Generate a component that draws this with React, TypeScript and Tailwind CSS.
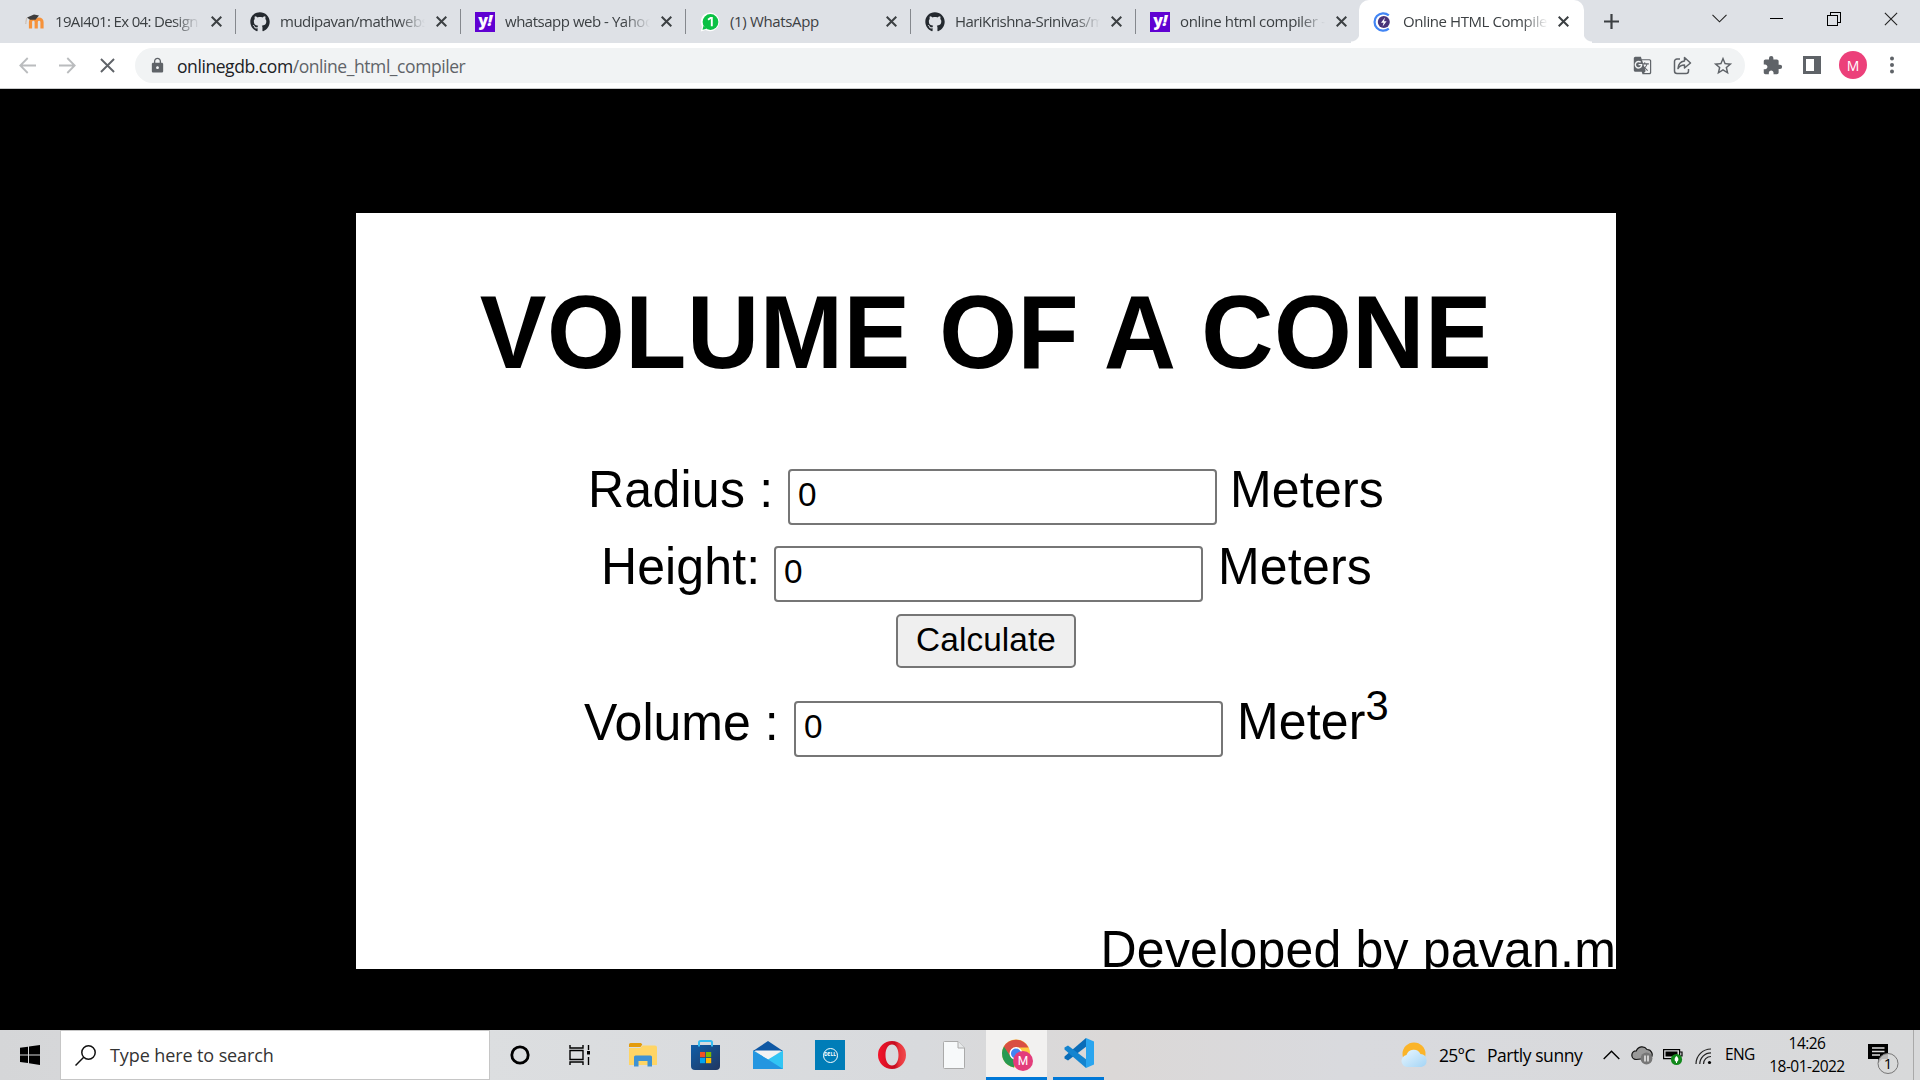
import React from "react";
import { FaGithub } from "react-icons/fa";
import { MdExtension, MdLock, MdStarBorder, MdGTranslate } from "react-icons/md";

const UI = "font-['Open_Sans',sans-serif]";

function Moodle() {
  return (
    <svg width="20" height="16" viewBox="0 0 20 16" fill="none">
      <path d="M4.500 15V8.500a2.600 2.600 0 0 1 5.700 0V15M10.200 8.500a2.800 2.800 0 0 1 5.800 0V15" stroke="#f6923a" strokeWidth="3.200" transform="translate(1 -.5)" />
      <path d="M2 3.600 9 .5l5 1-3.500 4.200H5z" fill="#3d3d3d" />
      <path d="M2 3.800C.9 6 1 8 .8 10" stroke="#c9b8a8" strokeWidth="1" />
    </svg>
  );
}

function Yahoo() {
  return (
    <span className="flex h-5 w-5 items-center justify-center bg-[#6001d2] text-[16px] leading-none font-extrabold tracking-[-0.5px] text-white">
      <span className="-mt-[3px]">y<i>!</i></span>
    </span>
  );
}

function WhatsApp() {
  return (
    <svg width="20" height="20" viewBox="0 0 20 20">
      <path d="M.8 19.500 2 14.500A9.300 9.300 0 1 1 5.600 18z" fill="#fff" />
      <circle cx="10.500" cy="10" r="7.900" fill="#0bc144" />
      <path d="m2.500 17.800 1-4 3 3z" fill="#0bc144" />
      <path d="M8 7.800 10.500 6h1.300v8.200" stroke="#fff" strokeWidth="1.900" fill="none" />
    </svg>
  );
}

function Gdb() {
  return (
    <svg width="20" height="20" viewBox="0 0 20 20" fill="none">
      <path d="M15.800 3.300A8.700 8.700 0 1 0 15.800 16.700" stroke="#4285f4" strokeWidth="2.200" />
      <circle cx="10.800" cy="10" r="6" fill="#4a3479" />
      <path d="m12 5.500-4 5.300h2.600L9.600 14.500l4-5.300H11z" fill="#fff" />
    </svg>
  );
}

function Cross({ size = 11, w = 2, color = "#3c4043" }: { size?: number; w?: number; color?: string }) {
  return (
    <svg width={size} height={size} viewBox="0 0 11 11" className="shrink-0">
      <path d="M.7.7l9.600 9.600M10.300.7.7 10.300" stroke={color} strokeWidth={(w * 11) / size} />
    </svg>
  );
}

type TabData = { icon: React.ReactNode; title: string; fit: string; fade: boolean };

const tabs: TabData[] = [
  { icon: <Moodle />, title: "19AI401: Ex 04: Design", fit: "tracking-[-0.65px]", fade: true },
  { icon: <FaGithub size={20} color="#24292f" />, title: "mudipavan/mathwebs", fit: "tracking-[-0.500px]", fade: true },
  { icon: <Yahoo />, title: "whatsapp web - Yahoo", fit: "tracking-[-0.480px]", fade: true },
  { icon: <WhatsApp />, title: "(1) WhatsApp", fit: "tracking-[-0.350px]", fade: false },
  { icon: <FaGithub size={20} color="#24292f" />, title: "HariKrishna-Srinivas/m", fit: "tracking-[-0.550px]", fade: true },
  { icon: <Yahoo />, title: "online html compiler -", fit: "tracking-[-0.360px]", fade: true },
];

function TabTitle({ t }: { t: TabData }) {
  return (
    <span className="-mt-[2px] -ml-px block h-[22px] w-[145px] overflow-hidden text-[15px] leading-[22px] whitespace-nowrap text-[#3c4043]">
      <span className={t.fit + (t.fade ? " block [mask-image:linear-gradient(to_right,#000_82%,transparent)]" : "")}>{t.title}</span>
    </span>
  );
}

function TabStrip() {
  return (
    <div className="flex h-[43px] bg-[#dee1e6]">
      <div className="flex pl-[11px]">
        {tabs.map((t, i) => (
          <div key={i} className="flex h-[43px] w-[225px] items-center pl-[14px]">
            <span className="flex w-[31px]">{t.icon}</span>
            <TabTitle t={t} />
            <span className="ml-[11px] flex"><Cross /></span>
            {i < 5 && <span className="ml-[13px] h-[25px] w-px shrink-0 bg-[#85888d]" />}
          </div>
        ))}
      </div>
      <div className="-ml-[10px] flex h-[43px] items-end">
        <span className="h-[10px] w-[8px] bg-[radial-gradient(circle_at_0_0,#dee1e6_8px,#fff_9px)]" />
        <div className="flex h-[43px] w-[225px] items-center rounded-t-[10px] bg-white pl-[14px]">
          <span className="flex w-[31px]"><Gdb /></span>
          <TabTitle t={{ icon: null, title: "Online HTML Compile", fit: "tracking-[-0.420px]", fade: true }} />
          <span className="ml-[10px] flex"><Cross /></span>
        </div>
        <span className="h-[10px] w-[8px] bg-[radial-gradient(circle_at_100%_0,#dee1e6_8px,#fff_9px)]" />
      </div>
      <div className="flex h-[43px] flex-1 items-center pl-[12px]">
        <svg width="15" height="15" viewBox="0 0 15 15"><path d="M7.500 0v15M0 7.500h15" stroke="#3c4043" strokeWidth="2.200" /></svg>
        <svg className="-mt-[6px] ml-[93px]" width="15" height="9" viewBox="0 0 15 9" fill="none"><path d="m.5.8 7 7 7-7" stroke="#222" strokeWidth="1.100" /></svg>
        <span className="-mt-[6px] ml-[43px] h-px w-[13px] bg-black" />
        <svg className="-mt-[6px] ml-[44px]" width="14" height="14" viewBox="0 0 14 14" fill="none" stroke="#000" shapeRendering="crispEdges"><path d="M.5 3.500h10v10H.5zM3.500 3V.5h10v10H11" /></svg>
        <span className="-mt-[6px] ml-[43px] flex"><Cross size={14} w={1.100} color="#222" /></span>
      </div>
    </div>
  );
}

function Arrow({ flip = false }: { flip?: boolean }) {
  return (
    <svg width="17" height="17" viewBox="0 0 17 17" fill="none" className={flip ? "rotate-180" : ""}>
      <path d="M17 8.500H1.500M8.700 1 1.300 8.500 8.700 16" stroke="#babcbe" strokeWidth="1.800" />
    </svg>
  );
}

function Toolbar() {
  return (
    <div className="flex h-[45px] items-center bg-white pb-px pl-[19px]">
      <Arrow />
      <span className="ml-[23px] flex"><Arrow flip /></span>
      <span className="ml-[24px] flex"><Cross size={15} w={1.900} color="#5f6368" /></span>
      <div className="mt-px ml-[20px] flex h-[35px] w-[1610px] items-center rounded-full bg-[#f1f3f4] pl-[14px]">
        <MdLock size={17} color="#5f6368" />
        <span className="ml-[11px] text-[17.500px] leading-[24px] tracking-[-0.430px] whitespace-nowrap text-[#5f6368]">
          <span className="text-[#202124]">onlinegdb.com</span>/online_html_compiler
        </span>
        <span className="ml-auto flex items-center pr-[11px]">
          <MdGTranslate size={19} color="#5f6368" />
          <svg className="ml-[21px]" width="19" height="19" viewBox="0 0 19 19" fill="none" stroke="#5f6368" strokeWidth="1.500" strokeLinejoin="round">
            <path d="M7 3H4a2.500 2.500 0 0 0-2.500 2.500V15A2.500 2.500 0 0 0 4 17.500h9a2.500 2.500 0 0 0 2.500-2.500v-2" />
            <path d="M11.500 1.500 17.500 7l-6 5V9C8.500 9 6.500 10 5 12.500 5.300 8.500 7.500 5.500 11.500 5z" />
          </svg>
          <MdStarBorder className="ml-[20px]" size={22} color="#5f6368" />
        </span>
      </div>
      <MdExtension className="ml-[17px]" size={21} color="#5f6368" />
      <svg className="ml-[20px]" width="18" height="18" viewBox="0 0 18 18"><path d="M0 0h18v18H0zM3 3v12h8V3z" fill="#5f6368" fillRule="evenodd" /></svg>
      <span className="ml-[18px] flex h-7 w-7 items-center justify-center rounded-full bg-[#ec407a] text-[14px] text-white">M</span>
      <svg className="ml-[23px]" width="4" height="18" viewBox="0 0 4 18" fill="#5f6368"><circle cx="2" cy="2.500" r="2" /><circle cx="2" cy="9" r="2" /><circle cx="2" cy="15.500" r="2" /></svg>
    </div>
  );
}

function NumberBox() {
  return <input defaultValue="0" className="h-[56px] w-[429px] shrink-0 rounded-[4px] border-2 border-[#767676] bg-white px-[8px] pb-[4px] text-[33.330px] text-black outline-none" />;
}

const label = "block shrink-0 origin-[50%_80%] scale-y-[1.04] whitespace-pre text-[50px] leading-[56px]";

function Calculator() {
  return (
    <div className="ml-[356px] h-[756px] w-[1260px] overflow-hidden bg-white font-['Liberation_Sans',sans-serif] text-black">
      <h1 className="origin-[50%_80%] scale-y-[1.04] pt-[62px] text-center text-[100px] leading-[114px] font-bold tracking-[0.550px]">VOLUME OF A CONE</h1>
      <div className="mt-[80px] flex h-[56px] pl-[232px]">
        <span className={label + " -mt-[7px] w-[200px] tracking-[0.250px]"}>Radius :</span>
        <NumberBox />
        <span className={label + " -mt-[7px] ml-[13px] tracking-[0.200px]"}>Meters</span>
      </div>
      <div className="mt-[21px] flex h-[56px] pl-[245px]">
        <span className={label + " -mt-[7px] w-[173px] tracking-[0.100px]"}>Height:</span>
        <NumberBox />
        <span className={label + " -mt-[7px] ml-[15px] tracking-[0.200px]"}>Meters</span>
      </div>
      <button className="mt-[12px] ml-[540px] flex h-[54px] w-[180px] items-center justify-center rounded-[5px] border-2 border-[#767676] bg-[#efefef] pb-[2px] text-[33.330px] tracking-[0.100px]">Calculate</button>
      <div className="mt-[33px] flex h-[56px] pl-[228px]">
        <span className={label + " -mt-[6px] w-[210px]"}>Volume :</span>
        <NumberBox />
        <span className={label + " -mt-[7px] ml-[14px] tracking-[0.150px]"}>Meter</span>
        <span className="-mt-[19px] text-[41.670px] leading-[48px]">3</span>
      </div>
      <p className={label + " mt-[165px] text-right tracking-[0.200px]"}>Developed by pavan.m</p>
    </div>
  );
}

function Taskbar() {
  return (
    <div className="flex h-[50px] items-center bg-[linear-gradient(to_right,#d5d6d8,#dcdee0_25%,#d8dadd_48%,#dbd8d7_58%,#d9dade_70%,#d8d9da)] text-black">
      <div className="flex w-[60px] justify-center">
        <svg width="20" height="20" viewBox="0 0 20 20"><path d="M0 2.800 8 1.700V9.400H0zM9 1.500 20 0v9.400H9zM0 10.400h8V18l-8-1.100zM9 10.400h11V20L9 18.300z" /></svg>
      </div>
      <div className="flex h-[50px] w-[430px] items-center border border-[#c6c6c6] bg-white pl-[14px]">
        <svg width="21" height="21" viewBox="0 0 21 21" fill="none" stroke="#111" strokeWidth="1.500"><circle cx="13.500" cy="7.500" r="6.700" /><path d="M8.700 12.300.5 20.500" /></svg>
        <span className="ml-[14px] text-[18px] tracking-[-0.100px] text-[#333]">Type here to search</span>
      </div>
      <svg className="ml-[20px]" width="20" height="20" viewBox="0 0 20 20"><circle cx="10" cy="10" r="8.200" fill="none" stroke="#000" strokeWidth="2.800" /></svg>
      <svg className="ml-[39px]" width="22" height="20" viewBox="0 0 22 20" fill="none" stroke="#000" strokeWidth="1.400"><path d="M1 0v3h13V0M1 5.500h13v9H1zM1 20v-3h13v3M19.500 0v5M19.500 12v8" /><path d="M18 6h3v3.500h-3z" fill="#000" stroke="none" /></svg>
      <svg className="ml-[38px]" width="28" height="24" viewBox="0 0 28 24"><path d="M0 5h11l2.500-2.500H26A2 2 0 0 1 28 4.500V22H0z" fill="#ffd565" /><path d="M0 1.500A1.500 1.500 0 0 1 1.500 0H12l1.300 1.500L11.500 4H0z" fill="#e39b0c" /><path d="M5 23.500V14a1.500 1.500 0 0 1 1.500-1.500h15A1.500 1.500 0 0 1 23 14v9.500h-4.500V18h-9v5.500z" fill="#3f92d3" /></svg>
      <svg className="ml-[34px]" width="29" height="30" viewBox="0 0 29 30"><defs><linearGradient id="store" x1="0" y1="0" x2="1" y2="1"><stop stopColor="#0f5ea8" /><stop offset="1" stopColor="#22365f" /></linearGradient></defs><path d="M0 5h29v21a4 4 0 0 1-4 4H4a4 4 0 0 1-4-4z" fill="url(#store)" /><path d="M8 6.500V2.500A1.500 1.500 0 0 1 9.500 1h10A1.500 1.500 0 0 1 21 2.500v4" fill="none" stroke="#36bdf2" strokeWidth="2" /><path d="M9 12h5.200v5.200H9z" fill="#f25022" /><path d="M15 12h5.200v5.200H15z" fill="#7fba00" /><path d="M9 18h5.200v5.200H9z" fill="#00a4ef" /><path d="M15 18h5.200v5.200H15z" fill="#ffb900" /></svg>
      <svg className="ml-[33px]" width="30" height="28" viewBox="0 0 30 28"><path d="M0 10 15 0l15 10H0z" fill="#0f58a4" /><path d="M2 9.500h26L15 20z" fill="#f3f3f3" /><path d="M0 9.500V28h30V9.500L15 18.500z" fill="#32c5f4" /><path d="M0 9.500V28h30L15 18.500z" fill="#2496e0" /></svg>
      <span className="ml-[32px] flex h-[30px] w-[30px] items-center justify-center bg-[#007db8]"><span className="flex h-[15px] w-[15px] items-center justify-center rounded-full border border-white text-[5px] font-bold text-white">DELL</span></span>
      <svg className="ml-[32px]" width="30" height="30" viewBox="0 0 30 30"><defs><linearGradient id="opera" x1="0" y1="0" x2="1" y2="0"><stop stopColor="#f4142b" /><stop offset=".6" stopColor="#c40d20" /><stop offset=".75" stopColor="#e8323a" /><stop offset="1" stopColor="#f04a4e" /></linearGradient></defs><path fillRule="evenodd" d="M15 1a14 14 0 1 0 0 28 14 14 0 0 0 0-28zM15 4.500c4 0 6.500 4.500 6.500 10.500S19 25.500 15 25.500 8.500 21 8.500 15 11 4.500 15 4.500z" fill="url(#opera)" /></svg>
      <svg className="ml-[36px]" width="22" height="28" viewBox="0 0 22 28"><path d="M.5 1.500a1 1 0 0 1 1-1H15L21.500 7v19.500a1 1 0 0 1-1 1h-19a1 1 0 0 1-1-1z" fill="#f7f9fa" stroke="#aaa" /><path d="M15 .5V7h6.500" fill="#e8eaeb" stroke="#aaa" /></svg>
      <span className="ml-[21px] flex h-[50px] w-[61px] items-center justify-center border-b-[3px] border-[#0078d7] bg-[#f2f1f0]">
        <svg className="mt-[3px]" width="32" height="32" viewBox="0 0 32 32"><circle cx="15" cy="14.500" r="14" fill="#ffcd40" /><path d="M15 14.500 2.900 7.500A14 14 0 0 0 13 28.400z" fill="#279a52" /><path d="M2.900 7.500A14 14 0 0 1 27.500 8.500H15L9.500 17.500z" fill="#d94f43" /><circle cx="15" cy="14.500" r="6.500" fill="#fff" /><circle cx="15" cy="14.500" r="5" fill="#4285f4" /><circle cx="22" cy="22" r="10" fill="#e33d7b" /><text x="22" y="26.300" textAnchor="middle" fontFamily="Roboto" fontSize="12" fill="#fff">M</text></svg>
      </span>
      <span className="ml-[6px] flex h-[50px] w-[51px] items-center justify-center border-b-[3px] border-[#0078d7]">
        <svg className="mb-px" width="30" height="30" viewBox="0 0 30 30"><path d="M23 8 4 22.500 .5 20.500v-2L22 0z" fill="#0a6db8" /><path d="M23 22 4 7.500.5 9.500v2L22 30z" fill="#1484cf" /><path d="M22 0l8 3.500v23L22 30z" fill="#2aa5ef" /></svg>
      </span>
      <svg className="ml-[297px]" width="27" height="26" viewBox="0 0 27 26"><defs><linearGradient id="cloud" x2="1" y2="1"><stop stopColor="#eaf7ff" /><stop offset="1" stopColor="#a3d4f5" /></linearGradient></defs><circle cx="13" cy="12" r="11.500" fill="#fbb429" /><path d="M6 25a6 6 0 0 1-.5-11.900A7.500 7.500 0 0 1 19.500 12 6.600 6.600 0 0 1 20.500 25z" fill="url(#cloud)" /></svg>
      <span className="ml-[11px] w-[48px] text-[17.500px] tracking-[-0.700px] whitespace-nowrap">25°C</span>
      <span className="w-[97px] text-[17.500px] tracking-[-0.450px] whitespace-nowrap">Partly sunny</span>
      <svg className="ml-[19px]" width="17" height="10" viewBox="0 0 17 10" fill="none"><path d="m.7 9 7.800-7.800L16.300 9" stroke="#000" strokeWidth="1.400" /></svg>
      <svg className="ml-[11px]" width="22" height="20" viewBox="0 0 22 20"><path d="M5 14.500a4.300 4.300 0 0 1 .3-8.600A6 6 0 0 1 16 4.500a5 5 0 0 1 3.700 8.500z" fill="#999" stroke="#111" strokeWidth="1.200" /><circle cx="15.500" cy="13.500" r="5.900" fill="#777" /><path d="M14 10.500v6M17 10.500v6" stroke="#fff" strokeWidth="1.300" /></svg>
      <svg className="mt-[3px] ml-[10px]" width="20" height="18" viewBox="0 0 20 18"><path d="M.6 1.600h16v9H.6zM17 4h2v4h-2" fill="none" stroke="#000" strokeWidth="1.200" /><path d="M2.500 3.500h12v5h-12z" /><circle cx="13.500" cy="11.500" r="5.600" fill="#11891b" /><path d="M13.500 8c2.500 2 2.500 5 0 6-2.500-1-2.500-4 0-6z" fill="#fff" /><path d="M13.500 11.500V15" stroke="#fff" /></svg>
      <svg className="mt-[2px] ml-[12px]" width="17" height="17" viewBox="0 0 17 17" fill="none" stroke="#222" strokeWidth="1.200"><path d="M1 16A15 15 0 0 1 16 1M4.800 16A11.200 11.200 0 0 1 16 4.800M8.500 16A7.500 7.500 0 0 1 16 8.500" /><circle cx="14.500" cy="14.500" r="1.600" fill="#000" stroke="none" /></svg>
      <span className="ml-[13px] w-[30px] text-[15.500px] tracking-[-0.600px]">ENG</span>
      <span className="ml-[12px] flex w-[80px] flex-col items-center text-[15.500px] leading-[23px] tracking-[-0.550px] whitespace-nowrap"><span>14:26</span><span>18-01-2022</span></span>
      <svg className="mt-[8px] ml-[21px]" width="31" height="32" viewBox="0 0 31 32"><path d="M0 1h20v15h-6l-4 4.500V16H0z" /><path d="M4 5h12.500M4 8.500h12.500M4 12h8" stroke="#ddd" strokeWidth="1.300" /><circle cx="20" cy="20.500" r="10" fill="#d8d8d8" fillOpacity=".85" stroke="#777" /><text x="20" y="26" textAnchor="middle" fontFamily="Open Sans" fontSize="15">1</text></svg>
      <span className="ml-[14px] h-[50px] w-px bg-[#a9a9a9]" />
    </div>
  );
}

export default function App() {
  return (
    <div className={UI + " flex h-[1080px] w-[1920px] flex-col overflow-hidden bg-black"}>
      <TabStrip />
      <Toolbar />
      <div className="h-px bg-[#c9cacb]" />
      <main className="h-[941px] bg-black pt-[124px]"><Calculator /></main>
      <Taskbar />
    </div>
  );
}
